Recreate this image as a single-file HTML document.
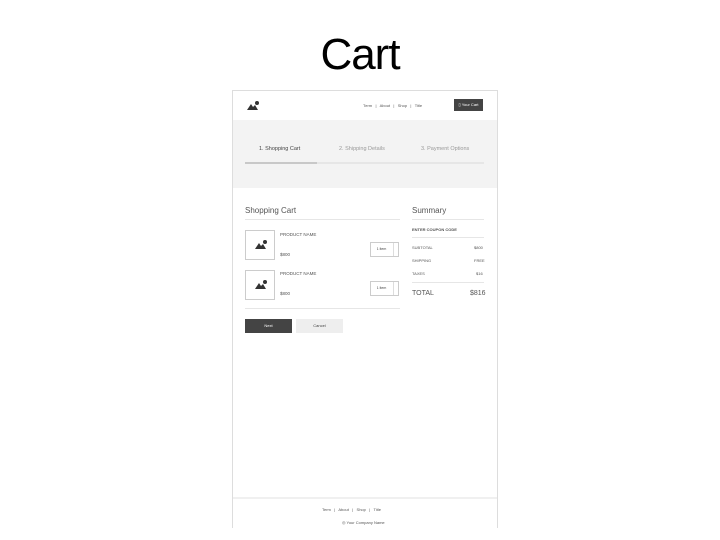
<!DOCTYPE html>
<html><head><meta charset="utf-8"><style>
*{margin:0;padding:0;box-sizing:border-box}
body{width:720px;height:540px;background:#fff;font-family:"Liberation Sans",sans-serif;position:relative;overflow:hidden;color:#444}
.a{position:absolute}
.t{font-size:5px;color:#555;white-space:nowrap}
.img{width:30px;height:30px;border:1px solid #ccc;background:#fff}
</style></head><body>
<div class="a" style="left:0;top:30px;width:720px;text-align:center;font-size:44px;color:#000;letter-spacing:-1px">Cart</div>
<div class="a" style="left:232px;top:90px;width:266px;height:438px;border:1px solid #ddd;border-bottom:none"></div>
<!-- header -->
<svg class="a" style="left:246px;top:100px" width="14" height="12"><path d="M1 10 L5 4 L7 7 L9 5 L12 10Z" fill="#333"/><circle cx="11" cy="3" r="2" fill="#333"/></svg>
<div class="a t" style="left:363px;top:103px;font-size:4px">Теrm &nbsp;&nbsp;|&nbsp;&nbsp; About &nbsp;&nbsp;|&nbsp;&nbsp; Shop &nbsp;&nbsp;|&nbsp;&nbsp; Title</div>
<div class="a" style="left:454px;top:99px;width:29px;height:12px;background:#444;color:#fff;font-size:4px;line-height:12px;text-align:center">▯ Your Cart</div>
<!-- band -->
<div class="a" style="left:233px;top:120px;width:264px;height:68px;background:#f3f3f3"></div>
<div class="a t" style="left:259px;top:146px;font-size:5.5px;color:#444">1. Shopping Cart</div>
<div class="a t" style="left:339px;top:146px;font-size:5.5px;color:#999">2. Shipping Details</div>
<div class="a t" style="left:421px;top:146px;font-size:5.5px;color:#999">3. Payment Options</div>
<div class="a" style="left:245px;top:162px;width:239px;height:2px;background:#e6e6e6"></div>
<div class="a" style="left:245px;top:162px;width:72px;height:2px;background:#c8c8c8"></div>
<!-- cart -->
<div class="a" style="left:245px;top:206px;font-size:8px;color:#555">Shopping Cart</div>
<div class="a" style="left:245px;top:219px;width:155px;height:1px;background:#e6e6e6"></div>
<div class="a img" style="left:245px;top:230px"></div>
<svg class="a" style="left:254px;top:239px" width="14" height="12"><path d="M1 10 L5 4 L7 7 L9 5 L12 10Z" fill="#333"/><circle cx="11" cy="3" r="2" fill="#333"/></svg>
<div class="a t" style="left:280px;top:232px;font-size:4.5px">PRODUCT NAME</div>
<div class="a t" style="left:280px;top:252px;font-size:4.5px">$800</div>
<div class="a" style="left:370px;top:242px;width:29px;height:15px;border:1px solid #ccc;font-size:3.5px;text-align:center;line-height:13px;padding-right:6px">1 item</div>
<div class="a" style="left:393px;top:243px;width:5px;height:13px;border-left:1px solid #ddd"></div>
<div class="a img" style="left:245px;top:270px"></div>
<svg class="a" style="left:254px;top:279px" width="14" height="12"><path d="M1 10 L5 4 L7 7 L9 5 L12 10Z" fill="#333"/><circle cx="11" cy="3" r="2" fill="#333"/></svg>
<div class="a t" style="left:280px;top:271px;font-size:4.5px">PRODUCT NAME</div>
<div class="a t" style="left:280px;top:291px;font-size:4.5px">$800</div>
<div class="a" style="left:370px;top:281px;width:29px;height:15px;border:1px solid #ccc;font-size:3.5px;text-align:center;line-height:13px;padding-right:6px">1 item</div>
<div class="a" style="left:393px;top:282px;width:5px;height:13px;border-left:1px solid #ddd"></div>
<div class="a" style="left:245px;top:308px;width:155px;height:1px;background:#e6e6e6"></div>
<div class="a" style="left:245px;top:319px;width:47px;height:14px;background:#444;color:#fff;font-size:4px;line-height:14px;text-align:center">Next</div>
<div class="a" style="left:296px;top:319px;width:47px;height:14px;background:#eee;font-size:4px;line-height:14px;text-align:center">Cancel</div>
<!-- summary -->
<div class="a" style="left:412px;top:206px;font-size:8px;color:#555">Summary</div>
<div class="a" style="left:412px;top:219px;width:72px;height:1px;background:#e6e6e6"></div>
<div class="a t" style="left:412px;top:227px;font-size:4px;font-weight:bold">ENTER COUPON CODE</div>
<div class="a" style="left:412px;top:237px;width:72px;height:1px;background:#e6e6e6"></div>
<div class="a t" style="left:412px;top:245px;font-size:4px">SUBTOTAL</div><div class="a t" style="left:474px;top:245px;font-size:4px">$800</div>
<div class="a t" style="left:412px;top:258px;font-size:4px">SHIPPING</div><div class="a t" style="left:474px;top:258px;font-size:4px">FREE</div>
<div class="a t" style="left:412px;top:271px;font-size:4px">TAXES</div><div class="a t" style="left:476px;top:271px;font-size:4px">$16</div>
<div class="a" style="left:412px;top:282px;width:72px;height:1px;background:#e6e6e6"></div>
<div class="a t" style="left:412px;top:290px;font-size:7px">TOTAL</div><div class="a t" style="left:470px;top:290px;font-size:7px">$816</div>
<!-- footer -->
<div class="a" style="left:233px;top:497px;width:264px;height:2px;background:#f0f0f0"></div>
<div class="a t" style="left:322px;top:507px;font-size:4px">Term &nbsp;&nbsp;|&nbsp;&nbsp; About &nbsp;&nbsp;|&nbsp;&nbsp; Shop &nbsp;&nbsp;|&nbsp;&nbsp; Title</div>
<div class="a t" style="left:342px;top:520px;font-size:4px">◎ Your Company Name</div>
</body></html>
